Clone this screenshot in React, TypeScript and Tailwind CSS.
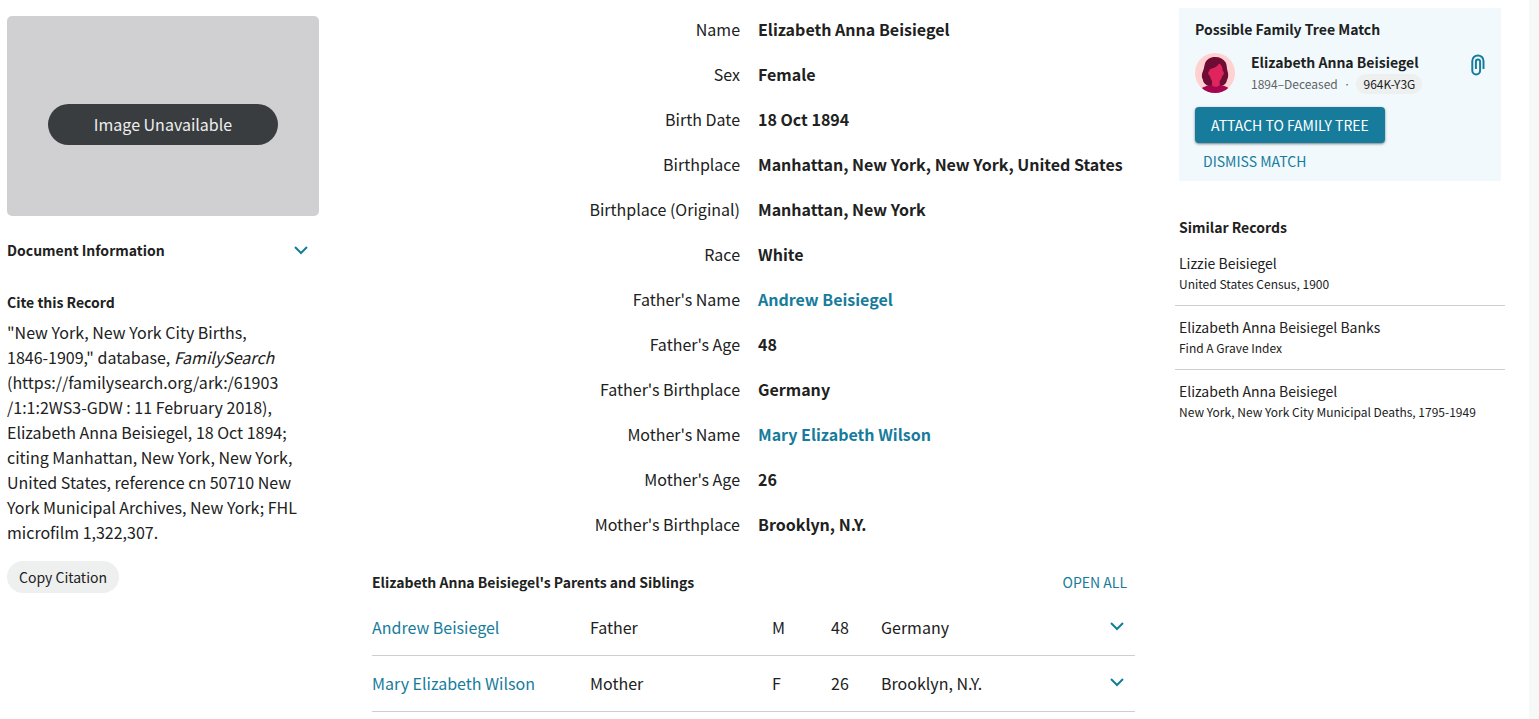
import { useState } from "react";

type DetailType = { label: string; value: string; link?: boolean };

const details: DetailType[] = [
  { label: "Name", value: "Elizabeth Anna Beisiegel" },
  { label: "Sex", value: "Female" },
  { label: "Birth Date", value: "18 Oct 1894" },
  { label: "Birthplace", value: "Manhattan, New York, New York, United States" },
  { label: "Birthplace (Original)", value: "Manhattan, New York" },
  { label: "Race", value: "White" },
  { label: "Father's Name", value: "Andrew Beisiegel", link: true },
  { label: "Father's Age", value: "48" },
  { label: "Father's Birthplace", value: "Germany" },
  { label: "Mother's Name", value: "Mary Elizabeth Wilson", link: true },
  { label: "Mother's Age", value: "26" },
  { label: "Mother's Birthplace", value: "Brooklyn, N.Y." },
];

const relatives = [
  { name: "Andrew Beisiegel", role: "Father", sex: "M", age: 48, place: "Germany" },
  { name: "Mary Elizabeth Wilson", role: "Mother", sex: "F", age: 26, place: "Brooklyn, N.Y." },
];

const similarRecords = [
  { name: "Lizzie Beisiegel", source: "United States Census, 1900" },
  { name: "Elizabeth Anna Beisiegel Banks", source: "Find A Grave Index" },
  { name: "Elizabeth Anna Beisiegel", source: "New York, New York City Municipal Deaths, 1795-1949" },
];

const Chevron = () => (
  <svg className="block" width="14" height="10" viewBox="0 0 14 10" fill="none" aria-hidden="true">
    <path d="M1 2l6 6 6-6" stroke="currentColor" strokeWidth="2" />
  </svg>
);

const Avatar = () => (
  <svg className="size-10 shrink-0" viewBox="0 0 40 40" aria-hidden="true">
    <defs>
      <clipPath id="avatar-clip">
        <circle cx="20" cy="20" r="20" />
      </clipPath>
    </defs>
    <g clipPath="url(#avatar-clip)">
      <rect width="40" height="40" fill="#ffd1d1" />
      <path
        d="M20 4c-5 0-8.500 2.500-10 6.500-.8 2.500-.8 4.500-2 7.500-1.500 3-1.500 6.500-.2 8.500.2 3 2.700 5.500 5.700 6.500h13c3.500-1 5-3 5.500-6 1.500-2.500 1.500-6 .5-9-1-3-.3-5.500-1.800-8.500C28.600 6 25 4 20 4z"
        fill="#6e0c34"
      />
      <path d="M4 38c2.500-3.500 6-5 12-6h9c6 1 8.500 2.500 11 6v3H4z" fill="#a5044f" />
      <path
        d="M24 10.500c-1.500 2.800-4.500 4.500-8.500 5.500-.8.300-1.200 1-1.200 2.300-1.200.2-1.300 1.600-.8 3 .4 1 1 1.500 1.500 1.700.5 2.300 1 3.700 2 4.700V32c.8 1.200 2.200 1.800 3.700 1.800s3.200-.6 4-1.800v-4.300c1.300-1.100 2-2.600 2.500-4.700.7-.2 1.200-.9 1.500-1.900.4-1.400.1-2.600-.9-2.800-.2-3.800-1-6.300-3.800-7.800z"
        fill="#e0245e"
      />
    </g>
  </svg>
);

const Paperclip = () => (
  <svg width="14" height="22" viewBox="0 0 14 22" fill="none" aria-hidden="true">
    <path
      d="M12.500 15V7a5.600 5.600 0 0 0-11.200 0v9.500a3.900 3.900 0 0 0 7.800 0V7.500a2.100 2.100 0 0 0-4.200 0V15"
      stroke="currentColor"
      strokeWidth="2"
    />
  </svg>
);

const DocumentPanel = () => {
  const [open, setOpen] = useState<boolean>(false);

  return (
    <aside className="w-[312px] shrink-0 pt-4">
      <div className="flex h-[200px] items-end justify-center rounded-[5px] bg-[#d0d0d2] pb-[71px]">
        <span className="flex h-[41px] w-[230px] items-center justify-center rounded-full bg-[#3a3d3f] text-[#eeefef]">
          Image Unavailable
        </span>
      </div>
      <button
        onClick={() => setOpen(!open)}
        aria-expanded={open}
        className="mt-[23px] flex w-full items-center justify-between pr-[11px] text-sm/[22px] font-bold"
      >
        Document Information
        <span className="text-[#177c9c]">
          <Chevron />
        </span>
      </button>
      <h2 className="mt-[30px] text-sm/[22px] font-bold">Cite this Record</h2>
      <p className="mt-[7px] pr-4">
        "New York, New York City Births, <span className="whitespace-nowrap">1846-1909,"</span> database,{" "}
        <i>FamilySearch</i> (https://familysearch.org/ark:/61903
        <wbr />
        /1:1:2WS3-GDW : 11 February 2018), Elizabeth Anna Beisiegel, 18 Oct 1894; citing Manhattan, New York, New
        York, United States, reference cn 50710 New York Municipal Archives, New York; FHL microfilm 1,322,307.
      </p>
      <button className="mt-4 flex h-8 items-center rounded-full bg-[#eeefef] px-3 text-sm">Copy Citation</button>
    </aside>
  );
};

const RecordDetails = () => (
  <main className="min-w-0 flex-1 pt-[7px]">
    <dl>
      {details.map((item) => (
        <div key={item.label} className="flex h-[45px] items-center gap-[18px]">
          <dt className="w-[368px] shrink-0 text-right">{item.label}</dt>
          <dd className="font-bold whitespace-nowrap">
            {item.link ? (
              <a href="#" className="text-[#177c9c]">
                {item.value}
              </a>
            ) : (
              item.value
            )}
          </dd>
        </div>
      ))}
    </dl>
    <div className="mt-6 flex items-center justify-between pr-2 text-sm/[22px]">
      <h2 className="font-bold">Elizabeth Anna Beisiegel's Parents and Siblings</h2>
      <button className="text-[#177c9c]">OPEN ALL</button>
    </div>
    <table className="mt-[7px] w-full table-fixed border-separate border-spacing-0 text-left">
      <colgroup>
        <col className="w-[218px]" />
        <col className="w-[182px]" />
        <col className="w-[59px]" />
        <col className="w-[50px]" />
        <col />
        <col className="w-12" />
      </colgroup>
      <tbody>
        {relatives.map((person) => (
          <tr key={person.name} className="h-14 *:border-b *:border-[#cdcfd0]">
            <td>
              <a href="#" className="text-[#177c9c]">
                {person.name}
              </a>
            </td>
            <td>{person.role}</td>
            <td>{person.sex}</td>
            <td>{person.age}</td>
            <td>{person.place}</td>
            <td className="pr-[11px] pb-[3px]">
              <button aria-label={`Show ${person.name}`} className="ml-auto block text-[#177c9c]">
                <Chevron />
              </button>
            </td>
          </tr>
        ))}
      </tbody>
    </table>
  </main>
);

const MatchPanel = () => (
  <aside className="w-[330px] shrink-0 pt-2">
    <section className="mx-1 bg-[#f1f9fd] px-4 pt-[10px] pb-2">
      <h2 className="text-sm/[22px] font-bold">Possible Family Tree Match</h2>
      <div className="mt-[13px] flex">
        <Avatar />
        <div className="ml-4 flex-1">
          <p className="text-sm/[18px] font-bold">Elizabeth Anna Beisiegel</p>
          <p className="mt-[3px] flex items-center text-xs/5 text-[#5f6263]">
            1894–Deceased <span className="mx-[6px]">·</span>
            <span className="rounded-full bg-[#eeefef] px-[7px] text-[#202121]">964K-Y3G</span>
          </p>
        </div>
        <button aria-label="Attached sources" className="flex h-6 items-center text-[#177c9c]">
          <Paperclip />
        </button>
      </div>
      <button className="mt-[13px] block h-9 rounded bg-[#177c9c] px-4 text-sm text-white shadow-sm shadow-black/40">
        ATTACH TO FAMILY TREE
      </button>
      <button className="mt-[7px] block px-2 text-sm/[23px] text-[#177c9c]">DISMISS MATCH</button>
    </section>
    <h2 className="mt-[35px] px-1 text-sm/[22px] font-bold">Similar Records</h2>
    <ul className="mt-1">
      {similarRecords.map((record) => (
        <li key={record.name} className="border-b border-[#cdcfd0] px-1 pt-[10px] pb-[11px] last:border-0">
          <p className="text-sm/[22px]">{record.name}</p>
          <p className="text-xs/5">{record.source}</p>
        </li>
      ))}
    </ul>
  </aside>
);

const App = () => {
  return (
    <div className="min-h-screen bg-[#f7f9f9] pr-[10px] font-['Noto_Sans_CJK_JP',sans-serif] text-base/[25px] text-[#202121]">
      <div className="flex min-h-screen bg-white pr-6 pl-[7px]">
        <DocumentPanel />
        <div className="ml-[53px] flex min-w-0 flex-1 gap-10">
          <RecordDetails />
          <MatchPanel />
        </div>
      </div>
    </div>
  );
};

export default App;
